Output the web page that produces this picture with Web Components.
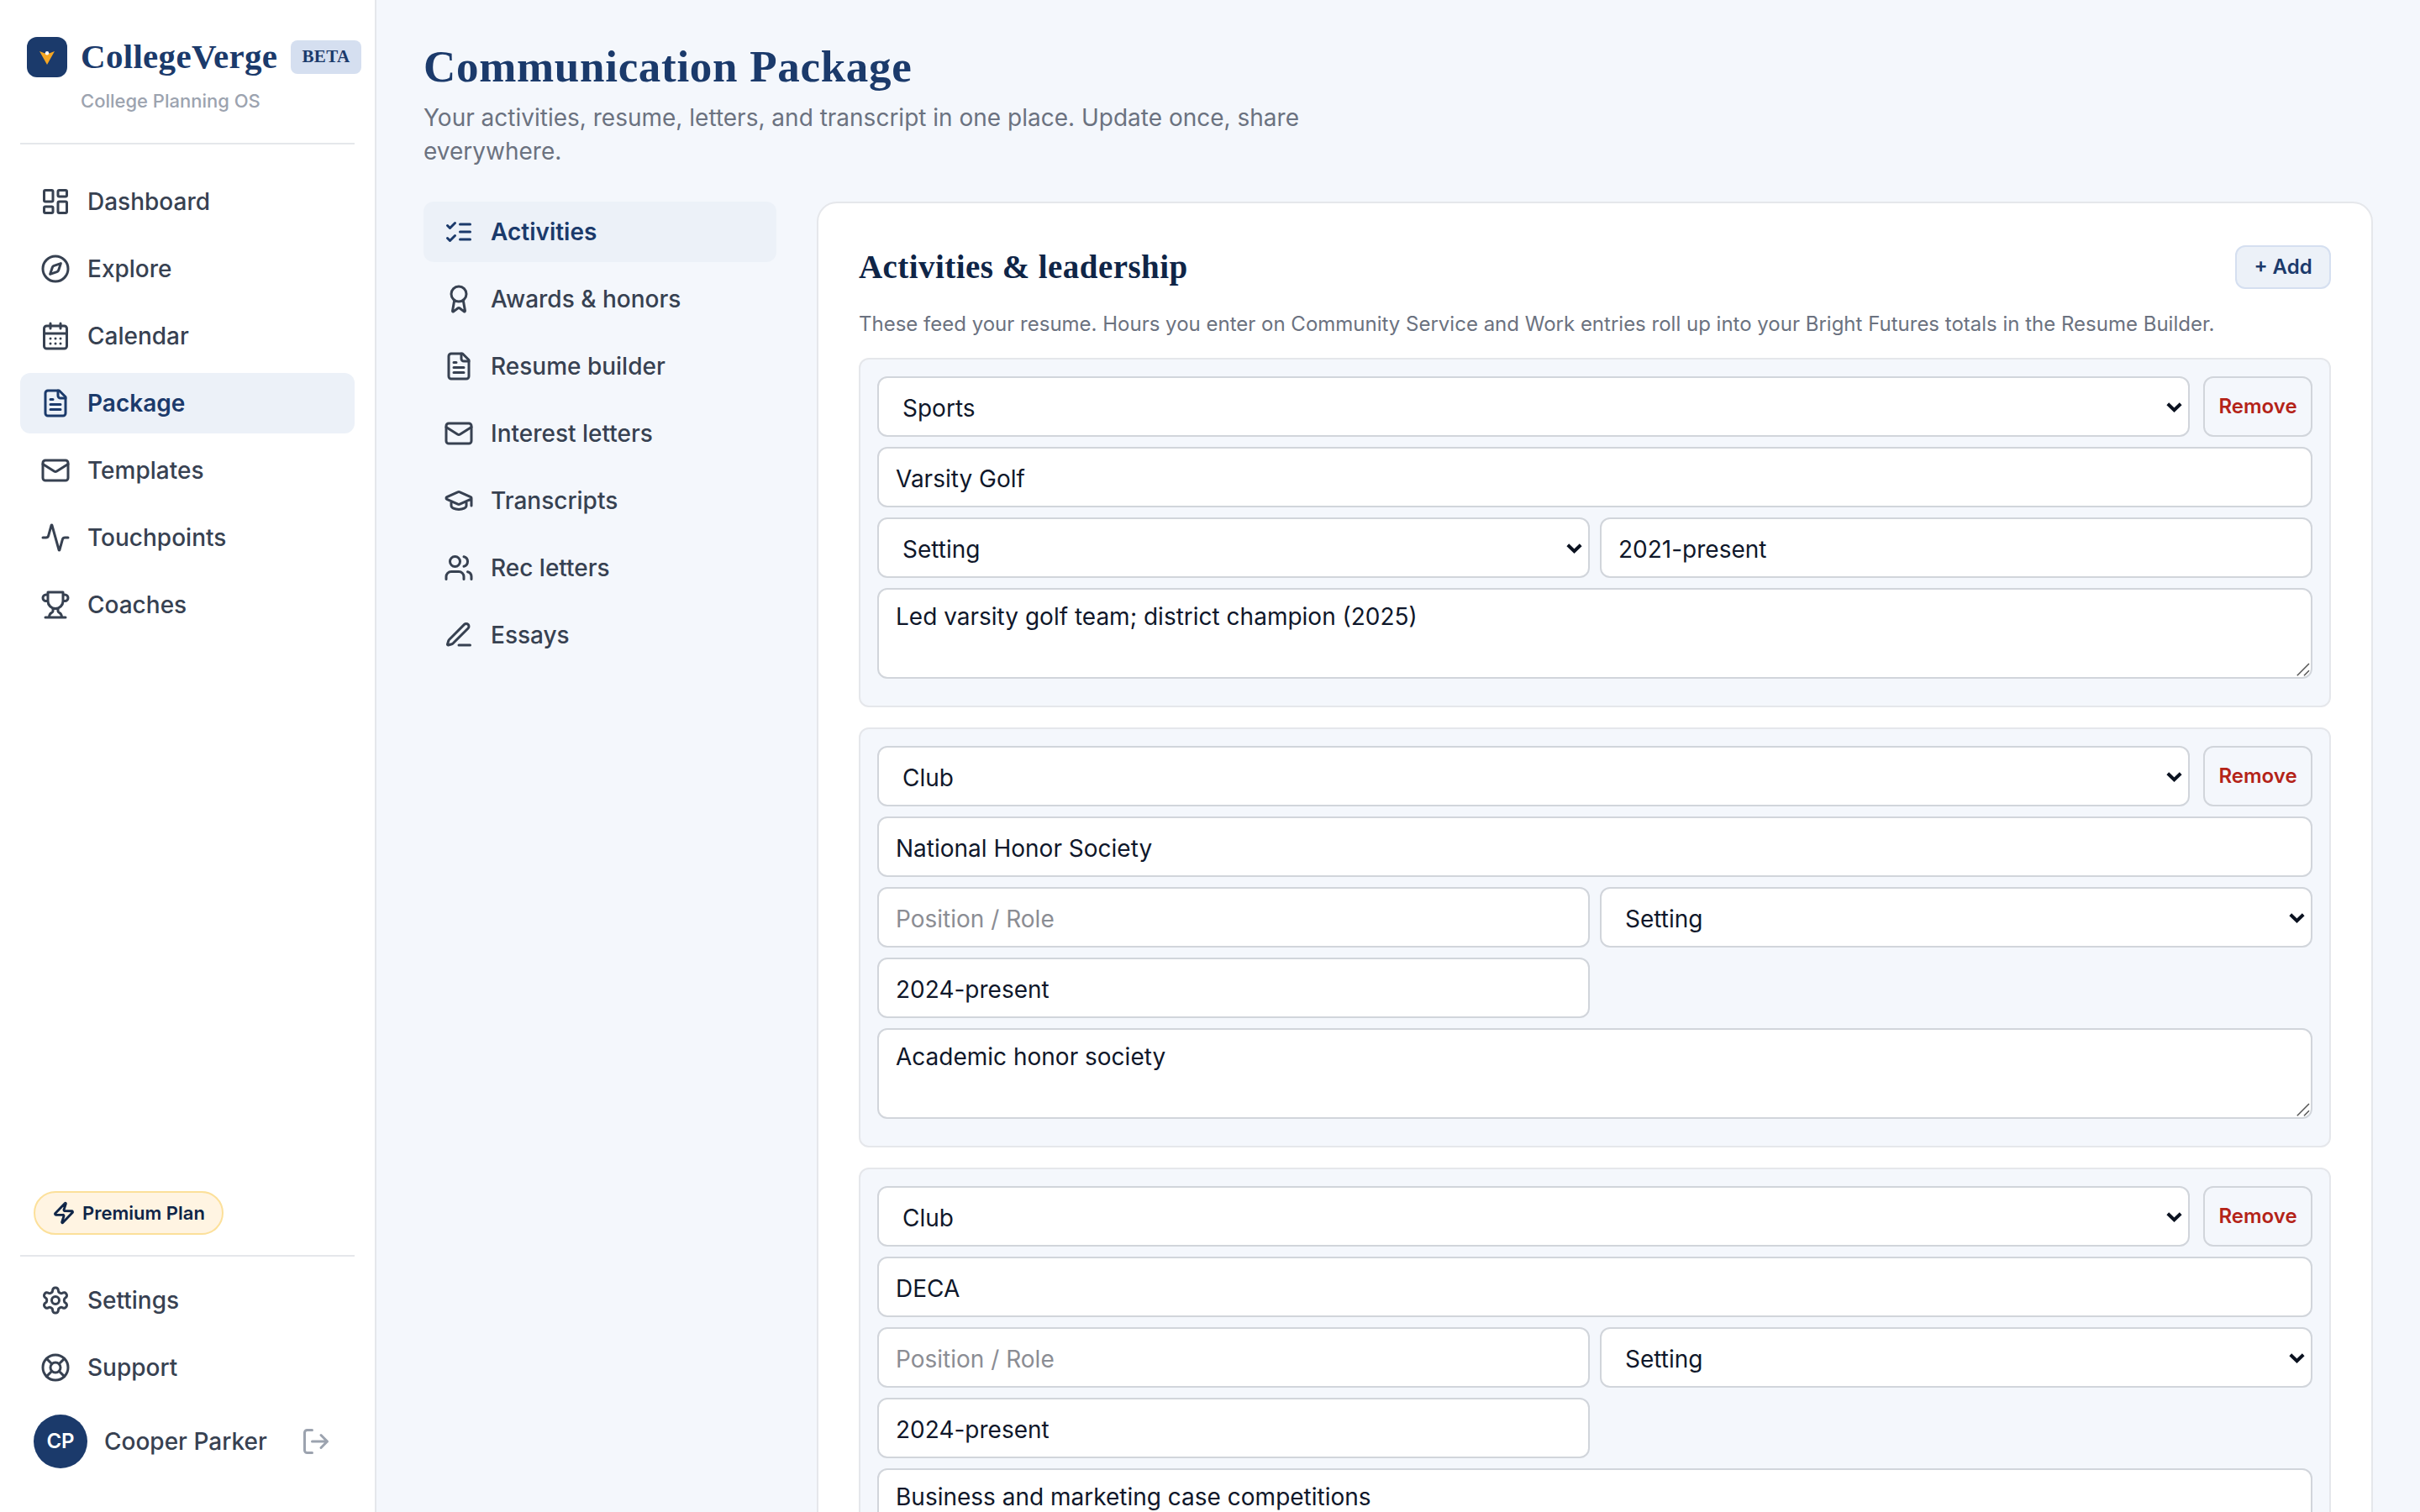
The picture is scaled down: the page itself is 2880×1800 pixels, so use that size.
<!DOCTYPE html>
<html lang="en">
<head>
<meta charset="UTF-8">
<title>Communication Package | CollegeVerge</title>
<style>
    :root {
        --navy: #1b3a6b;
        --navy-deep: #0f2547;
        --blue50: #f4f7fc;
        --blue100: #ecf1f8;
        --blue200: #d5dff0;
        --gray200: #e5e7eb;
        --gray300: #d1d5db;
        --gray400: #9ca3af;
        --gray500: #6b7280;
        --gray700: #374151;
        --ink: #0f172a;
        --serif: "Liberation Serif", serif;
    }

    body {
        margin: 0;
        overflow: hidden;
        font-family: Inter, sans-serif;
        font-size: 28px;
        color: var(--gray700);
        background: var(--blue50);
    }
</style>
</head>
<body>

<app-shell>

    <side-bar slot="sidebar">
        <nav-item icon="dashboard">Dashboard</nav-item>
        <nav-item icon="compass">Explore</nav-item>
        <nav-item icon="calendar">Calendar</nav-item>
        <nav-item icon="file" active>Package</nav-item>
        <nav-item icon="mail">Templates</nav-item>
        <nav-item icon="activity">Touchpoints</nav-item>
        <nav-item icon="trophy">Coaches</nav-item>
        <plan-badge slot="bottom">Premium Plan</plan-badge>
        <nav-item slot="links" icon="settings">Settings</nav-item>
        <nav-item slot="links" icon="support">Support</nav-item>
        <user-row slot="user" initials="CP">Cooper Parker</user-row>
    </side-bar>

    <page-header heading="Communication Package">Your activities, resume, letters, and transcript in one place. Update once, share everywhere.</page-header>

    <package-layout>

        <nav-item slot="tabs" icon="checks" active>Activities</nav-item>
        <nav-item slot="tabs" icon="award">Awards &amp; honors</nav-item>
        <nav-item slot="tabs" icon="file">Resume builder</nav-item>
        <nav-item slot="tabs" icon="mail">Interest letters</nav-item>
        <nav-item slot="tabs" icon="cap">Transcripts</nav-item>
        <nav-item slot="tabs" icon="users">Rec letters</nav-item>
        <nav-item slot="tabs" icon="pen">Essays</nav-item>

        <content-panel heading="Activities &amp; leadership">
            <span slot="note">These feed your resume. Hours you enter on Community Service and Work entries roll up into your Bright Futures totals in the Resume Builder.</span>

            <activity-card>
                <form-field slot="type" kind="select">Sports</form-field>
                <form-field wide>Varsity Golf</form-field>
                <form-field kind="select">Setting</form-field>
                <form-field>2021-present</form-field>
                <form-field wide kind="textarea">Led varsity golf team; district champion (2025)</form-field>
            </activity-card>

            <activity-card>
                <form-field slot="type" kind="select">Club</form-field>
                <form-field wide>National Honor Society</form-field>
                <form-field empty>Position / Role</form-field>
                <form-field kind="select">Setting</form-field>
                <form-field>2024-present</form-field>
                <form-field wide kind="textarea">Academic honor society</form-field>
            </activity-card>

            <activity-card>
                <form-field slot="type" kind="select">Club</form-field>
                <form-field wide>DECA</form-field>
                <form-field empty>Position / Role</form-field>
                <form-field kind="select">Setting</form-field>
                <form-field>2024-present</form-field>
                <form-field wide kind="textarea">Business and marketing case competitions</form-field>
            </activity-card>

        </content-panel>

    </package-layout>

</app-shell>

<script>
const ICONS = {
    dashboard: '<rect width="7" height="9" x="3" y="3" rx="1"/><rect width="7" height="5" x="14" y="3" rx="1"/><rect width="7" height="9" x="14" y="12" rx="1"/><rect width="7" height="5" x="3" y="16" rx="1"/>',
    compass: '<path d="m16.24 7.76-1.804 5.411a2 2 0 0 1-1.265 1.265L7.76 16.24l1.804-5.411a2 2 0 0 1 1.265-1.265z"/><circle cx="12" cy="12" r="10"/>',
    calendar: '<path d="M8 2v4M16 2v4"/><rect width="18" height="18" x="3" y="4" rx="2"/><path d="M3 10h18M8 14h.01M12 14h.01M16 14h.01M8 18h.01M12 18h.01M16 18h.01"/>',
    file: '<path d="M15 2H6a2 2 0 0 0-2 2v16a2 2 0 0 0 2 2h12a2 2 0 0 0 2-2V7Z"/><path d="M14 2v4a2 2 0 0 0 2 2h4M10 9H8M16 13H8M16 17H8"/>',
    mail: '<rect width="20" height="16" x="2" y="4" rx="2"/><path d="m22 7-8.97 5.7a1.94 1.94 0 0 1-2.06 0L2 7"/>',
    activity: '<path d="M22 12h-2.48a2 2 0 0 0-1.93 1.46l-2.35 8.36a.25.25 0 0 1-.48 0L9.24 2.18a.25.25 0 0 0-.48 0l-2.35 8.36A2 2 0 0 1 4.49 12H2"/>',
    trophy: '<path d="M6 9H4.5a2.5 2.5 0 0 1 0-5H6M18 9h1.5a2.5 2.5 0 0 0 0-5H18M4 22h16M10 14.66V17c0 .55-.47.98-.97 1.21C7.85 18.75 7 20.24 7 22M14 14.66V17c0 .55.47.98.97 1.21C16.15 18.75 17 20.24 17 22M18 2H6v7a6 6 0 0 0 12 0V2Z"/>',
    settings: '<path d="M12.22 2h-.44a2 2 0 0 0-2 2v.18a2 2 0 0 1-1 1.73l-.43.25a2 2 0 0 1-2 0l-.15-.08a2 2 0 0 0-2.73.73l-.22.38a2 2 0 0 0 .73 2.73l.15.1a2 2 0 0 1 1 1.72v.51a2 2 0 0 1-1 1.74l-.15.09a2 2 0 0 0-.73 2.73l.22.38a2 2 0 0 0 2.73.73l.15-.08a2 2 0 0 1 2 0l.43.25a2 2 0 0 1 1 1.73V20a2 2 0 0 0 2 2h.44a2 2 0 0 0 2-2v-.18a2 2 0 0 1 1-1.73l.43-.25a2 2 0 0 1 2 0l.15.08a2 2 0 0 0 2.73-.73l.22-.39a2 2 0 0 0-.73-2.73l-.15-.08a2 2 0 0 1-1-1.74v-.5a2 2 0 0 1 1-1.74l.15-.09a2 2 0 0 0 .73-2.73l-.22-.38a2 2 0 0 0-2.73-.73l-.15.08a2 2 0 0 1-2 0l-.43-.25a2 2 0 0 1-1-1.73V4a2 2 0 0 0-2-2z"/><circle cx="12" cy="12" r="3"/>',
    support: '<circle cx="12" cy="12" r="10"/><path d="m4.93 4.93 4.24 4.24M14.83 9.17l4.24-4.24M14.83 14.83l4.24 4.24M9.17 14.83l-4.24 4.24"/><circle cx="12" cy="12" r="4"/>',
    logout: '<path d="M9 21H5a2 2 0 0 1-2-2V5a2 2 0 0 1 2-2h4"/><path d="m16 17 5-5-5-5M21 12H9"/>',
    zap: '<path d="M4 14a1 1 0 0 1-.78-1.63l9.9-10.2a.5.5 0 0 1 .86.46l-1.92 6.02A1 1 0 0 0 13 10h7a1 1 0 0 1 .78 1.63l-9.9 10.2a.5.5 0 0 1-.86-.46l1.92-6.02A1 1 0 0 0 11 14z"/>',
    checks: '<path d="m3 17 2 2 4-4M3 7l2 2 4-4M13 6h8M13 12h8M13 18h8"/>',
    award: '<path d="m15.477 12.89 1.515 8.526a.5.5 0 0 1-.81.47l-3.58-2.687a1 1 0 0 0-1.197 0l-3.586 2.686a.5.5 0 0 1-.81-.469l1.514-8.526"/><circle cx="12" cy="8" r="6"/>',
    cap: '<path d="M21.42 10.922a1 1 0 0 0-.019-1.838L12.83 5.18a2 2 0 0 0-1.66 0L2.6 9.08a1 1 0 0 0 0 1.832l8.57 3.908a2 2 0 0 0 1.66 0zM22 10v6M6 12.5V16a6 3 0 0 0 12 0v-3.5"/>',
    users: '<path d="M16 21v-2a4 4 0 0 0-4-4H6a4 4 0 0 0-4 4v2"/><circle cx="9" cy="7" r="4"/><path d="M22 21v-2a4 4 0 0 0-3-3.87M16 3.13a4 4 0 0 1 0 7.75"/>',
    pen: '<path d="M12 20h9M16.376 3.622a1 1 0 0 1 3.002 3.002L7.368 18.635a2 2 0 0 1-.855.506l-2.872.838a.5.5 0 0 1-.62-.62l.838-2.872a2 2 0 0 1 .506-.854z"/>'
}

function icon(name, size = 36, stroke = 2){
    return `<svg width="${size}" height="${size}" viewBox="0 0 24 24" fill="none" stroke="currentColor" stroke-width="${stroke}" stroke-linecap="round" stroke-linejoin="round">${ICONS[name]}</svg>`
}

class AppShell extends HTMLElement{
    constructor(){
        super();
        this.attachShadow({mode: 'open'})
        this.shadowRoot.innerHTML=`

            <style>

                :host {
                    display: grid;
                    grid-template-columns: 448px 1fr;
                    height: 100vh;
                    overflow: hidden;
                }

                main {
                    box-sizing: border-box;
                    min-width: 0;
                    height: 100vh;
                    overflow: hidden;
                    padding: 48px 56px 0;
                }

            </style>

            <slot name="sidebar"></slot>
            <main><slot></slot></main>

        `
    }
}

class SideBar extends HTMLElement{
    constructor(){
        super();
        this.attachShadow({mode: 'open'})
        this.shadowRoot.innerHTML=`

            <style>

                :host {
                    display: flex;
                    flex-direction: column;
                    box-sizing: border-box;
                    height: 100vh;
                    padding: 44px 24px 52px;
                    background: #ffffff;
                    border-right: 2px solid var(--gray200);
                }

                .brand {
                    padding: 0 0 34px 8px;
                    border-bottom: 2px solid var(--gray200);
                }

                .brand-row {
                    display: flex;
                    align-items: center;
                    height: 48px;
                    width: max-content;
                }

                .logo {
                    display: block;
                    margin-right: 16px;
                }

                .name {
                    width: 234px;
                    margin-right: 16px;
                    padding-bottom: 1px;
                    font: bold 41px/45px var(--serif);
                    letter-spacing: 0.3px;
                    white-space: nowrap;
                    color: var(--navy);
                }

                .beta {
                    box-sizing: border-box;
                    width: 84px;
                    padding-bottom: 2px;
                    border-radius: 8px;
                    background: var(--blue200);
                    color: var(--navy);
                    font: bold 21px/38px var(--serif);
                    letter-spacing: 0.4px;
                    text-align: center;
                }

                .tagline {
                    margin: 12px 0 0 64px;
                    font-size: 22px;
                    font-weight: 500;
                    line-height: 32px;
                    color: var(--gray400);
                }

                nav {
                    display: flex;
                    flex-direction: column;
                    gap: 8px;
                }

                .primary {
                    margin-top: 32px;
                }

                .bottom {
                    margin-top: auto;
                    padding: 0 16px 24px;
                    border-bottom: 2px solid var(--gray200);
                    display: flex;
                }

                .links {
                    margin: 16px 0 20px;
                }

            </style>

            <div class="brand">

                <div class="brand-row">

                    <svg class="logo" width="48" height="48" viewBox="0 0 48 48">
                        <rect width="48" height="48" rx="12" fill="#1b3a6b"/>
                        <path d="M15 17 24 20.500 33 17 24 33Z" fill="#f5a623"/>
                        <circle cx="24" cy="19.200" r="2.200" fill="#ffffff"/>
                    </svg>

                    <span class="name">CollegeVerge</span>
                    <span class="beta">BETA</span>

                </div>

                <div class="tagline">College Planning OS</div>

            </div>

            <nav class="primary"><slot></slot></nav>

            <div class="bottom"><slot name="bottom"></slot></div>

            <nav class="links"><slot name="links"></slot></nav>

            <slot name="user"></slot>

        `
    }
}

class NavItem extends HTMLElement{
    constructor(){
        super();
        this.attachShadow({mode: 'open'})
        this.shadowRoot.innerHTML=`

            <style>

                :host {
                    display: flex;
                    align-items: center;
                    gap: 20px;
                    box-sizing: border-box;
                    height: 72px;
                    padding: 0 24px;
                    border-radius: 12px;
                    font-weight: 500;
                    line-height: 40px;
                    white-space: nowrap;
                    cursor: pointer;
                }

                :host([active]) {
                    background: var(--blue100);
                    color: var(--navy);
                    font-weight: 600;
                }

            </style>

            ${icon(this.getAttribute('icon'))}
            <span><slot></slot></span>

        `
    }
}

class PlanBadge extends HTMLElement{
    constructor(){
        super();
        this.attachShadow({mode: 'open'})
        this.shadowRoot.innerHTML=`

            <style>

                :host {
                    display: flex;
                    align-items: center;
                    gap: 8px;
                    box-sizing: border-box;
                    height: 52px;
                    padding: 0 20px;
                    border: 2px solid #fce09a;
                    border-radius: 26px;
                    background: #fff4e2;
                    color: var(--navy-deep);
                    font-size: 22px;
                    font-weight: 600;
                    white-space: nowrap;
                }

            </style>

            ${icon('zap', 28, 2.5)}
            <span><slot></slot></span>

        `
    }
}

class UserRow extends HTMLElement{
    constructor(){
        super();
        this.attachShadow({mode: 'open'})
        this.shadowRoot.innerHTML=`

            <style>

                :host {
                    display: flex;
                    align-items: center;
                    gap: 20px;
                    padding: 0 28px 0 16px;
                    font-weight: 500;
                }

                .avatar {
                    width: 64px;
                    border-radius: 50%;
                    background: var(--navy);
                    color: #ffffff;
                    font-size: 24px;
                    font-weight: 600;
                    line-height: 64px;
                    text-align: center;
                }

                .name {
                    flex: 1;
                    white-space: nowrap;
                }

                svg {
                    color: var(--gray400);
                }

            </style>

            <span class="avatar">${this.getAttribute('initials')}</span>
            <span class="name"><slot></slot></span>
            ${icon('logout')}

        `
    }
}

class PageHeader extends HTMLElement{
    constructor(){
        super();
        this.attachShadow({mode: 'open'})
        this.shadowRoot.innerHTML=`

            <style>

                :host {
                    display: block;
                    margin-bottom: 40px;
                }

                h1 {
                    margin: 0 0 10px;
                    font: bold 53px/62px var(--serif);
                    letter-spacing: 0.7px;
                    color: var(--navy);
                }

                p {
                    margin: 0;
                    max-width: 1120px;
                    line-height: 40px;
                    color: var(--gray500);
                }

            </style>

            <h1>${this.getAttribute('heading')}</h1>
            <p><slot></slot></p>

        `
    }
}

class PackageLayout extends HTMLElement{
    constructor(){
        super();
        this.attachShadow({mode: 'open'})
        this.shadowRoot.innerHTML=`

            <style>

                :host {
                    display: grid;
                    grid-template-columns: 420px minmax(0, 1fr);
                    column-gap: 48px;
                    align-items: start;
                }

                nav {
                    display: flex;
                    flex-direction: column;
                    gap: 8px;
                }

            </style>

            <nav><slot name="tabs"></slot></nav>
            <slot></slot>

        `
    }
}

class ContentPanel extends HTMLElement{
    constructor(){
        super();
        this.attachShadow({mode: 'open'})
        this.shadowRoot.innerHTML=`

            <style>

                :host {
                    display: block;
                    padding: 48px;
                    border: 2px solid var(--gray200);
                    border-radius: 24px;
                    background: #ffffff;
                }

                header {
                    display: flex;
                    align-items: center;
                    justify-content: space-between;
                    height: 56px;
                }

                h2 {
                    margin: 0;
                    font: bold 39px/56px var(--serif);
                    letter-spacing: 0.45px;
                    color: var(--navy-deep);
                }

                button {
                    box-sizing: border-box;
                    width: 114px;
                    height: 52px;
                    padding: 0 0 2px;
                    border: 2px solid var(--blue200);
                    border-radius: 12px;
                    background: var(--blue100);
                    color: var(--navy);
                    font: 600 24px Inter, sans-serif;
                }

                p {
                    margin: 21px 0;
                    font-size: 24px;
                    line-height: 38px;
                    color: var(--gray500);
                }

                .cards {
                    display: flex;
                    flex-direction: column;
                    gap: 24px;
                }

            </style>

            <header>
                <h2>${this.getAttribute('heading')}</h2>
                <button>+ Add</button>
            </header>

            <p><slot name="note"></slot></p>

            <div class="cards"><slot></slot></div>

        `
    }
}

class ActivityCard extends HTMLElement{
    constructor(){
        super();
        this.attachShadow({mode: 'open'})
        this.shadowRoot.innerHTML=`

            <style>

                :host {
                    display: block;
                    padding: 20px 20px 32px;
                    border: 2px solid var(--gray200);
                    border-radius: 12px;
                    background: var(--blue50);
                }

                .top {
                    display: grid;
                    grid-template-columns: 1fr 130px;
                    gap: 16px;
                    margin-bottom: 12px;
                }

                button {
                    padding: 0 0 2px;
                    border: 2px solid var(--gray300);
                    border-radius: 12px;
                    background: transparent;
                    color: #b42318;
                    font: 600 24px Inter, sans-serif;
                }

                .fields {
                    display: grid;
                    grid-template-columns: 1fr 1fr;
                    gap: 12px;
                }

                ::slotted([wide]) {
                    grid-column: 1 / -1;
                }

            </style>

            <div class="top">
                <slot name="type"></slot>
                <button>Remove</button>
            </div>

            <div class="fields"><slot></slot></div>

        `
    }
}

class FormField extends HTMLElement{
    constructor(){
        super();
        const kind = this.getAttribute('kind')
        this.attachShadow({mode: 'open'})
        this.shadowRoot.innerHTML=`

            <style>

                :host {
                    position: relative;
                    display: flex;
                    align-items: center;
                    justify-content: space-between;
                    box-sizing: border-box;
                    height: 72px;
                    padding: 3px 20px 0;
                    border: 2px solid var(--gray300);
                    border-radius: 12px;
                    background: #ffffff;
                    color: var(--ink);
                    line-height: 34px;
                }

                :host([empty]) {
                    color: #8b8d94;
                }

                :host([kind="select"]) {
                    padding: 3px 7px 0 28px;
                }

                :host([kind="textarea"]) {
                    align-items: flex-start;
                    height: 108px;
                    padding-top: 15px;
                }

                .chevron {
                    margin-top: -2px;
                    color: #0b1220;
                }

                /* drag corner of the textarea */
                .grip {
                    position: absolute;
                    right: 1px;
                    bottom: 1px;
                }

            </style>

            <span><slot></slot></span>
            ${kind == 'select' ? '<svg class="chevron" width="19" height="12" viewBox="0 0 19 12" fill="none" stroke="currentColor" stroke-width="4"><path d="M1.800 1.800 9.500 9.200 17.200 1.800"/></svg>' : ''}
            ${kind == 'textarea' ? '<svg class="grip" width="16" height="16" viewBox="0 0 16 16" stroke="#555555" stroke-width="1.500"><path d="M.8 15.200 15 1M9 15.200 15 9.200"/></svg>' : ''}

        `
    }
}

customElements.define('app-shell', AppShell);
customElements.define('side-bar', SideBar);
customElements.define('nav-item', NavItem);
customElements.define('plan-badge', PlanBadge);
customElements.define('user-row', UserRow);
customElements.define('page-header', PageHeader);
customElements.define('package-layout', PackageLayout);
customElements.define('content-panel', ContentPanel);
customElements.define('activity-card', ActivityCard);
customElements.define('form-field', FormField);
</script>

</body>
</html>
